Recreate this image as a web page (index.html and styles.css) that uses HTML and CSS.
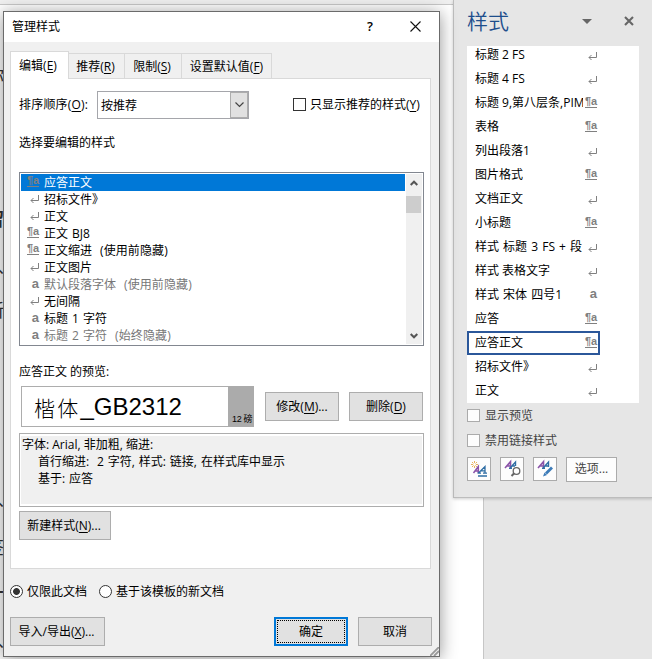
FILE: index.html
```html
<!DOCTYPE html>
<html lang="zh-CN">
<head>
<meta charset="utf-8">
<title>管理样式</title>
<link rel="stylesheet" href="styles.css">
</head>
<body>
<svg class="defs" aria-hidden="true">
  <symbol id="ret" viewBox="0 0 9 9"><path d="M8.5 0v5.5H1M3.5 3L1 5.5L3.5 8" fill="none" stroke="#808080"/></symbol>
  <symbol id="up" viewBox="0 0 8 6"><path d="M.7 5L4 1.7L7.3 5" fill="none" stroke="#555" stroke-width="2"/></symbol>
</svg>
<div class="ribbon"></div>
<div class="canvas"></div>

<aside class="pane">
  <header class="pane-head"><h1>样式</h1>
    <svg class="menu" viewBox="0 0 10 5"><path d="M0 0h10L5 5z" fill="#666"/></svg>
    <svg class="shut" viewBox="0 0 10 10"><path d="M1 1l8 8M9 1l-8 8" stroke="#666" stroke-width="2.1"/></svg>
  </header>
  <div class="styles">
    <div class="style"><span>标题 2 FS</span><svg class="ret"><use href="#ret"/></svg></div>
    <div class="style"><span>标题 4 FS</span><svg class="ret"><use href="#ret"/></svg></div>
    <div class="style"><span>标题 9,第八层条,PIM</span><b class="pa">¶a</b></div>
    <div class="style"><span>表格</span><b class="pa">¶a</b></div>
    <div class="style"><span>列出段落1</span><svg class="ret"><use href="#ret"/></svg></div>
    <div class="style"><span>图片格式</span><b class="pa">¶a</b></div>
    <div class="style"><span>文档正文</span><svg class="ret"><use href="#ret"/></svg></div>
    <div class="style"><span>小标题</span><b class="pa">¶a</b></div>
    <div class="style"><span class="wide">样式 标题 3 FS + 段</span><svg class="ret"><use href="#ret"/></svg></div>
    <div class="style"><span>样式 表格文字</span><svg class="ret"><use href="#ret"/></svg></div>
    <div class="style"><span class="wide">样式 宋体 四号1</span><b class="ch">a</b></div>
    <div class="style"><span>应答</span><b class="pa">¶a</b></div>
    <div class="style current"><span>应答正文</span><b class="pa">¶a</b></div>
    <div class="style"><span>招标文件》</span><svg class="ret"><use href="#ret"/></svg></div>
    <div class="style"><span>正文</span><svg class="ret"><use href="#ret"/></svg></div>
  </div>
  <label class="opt"><i></i>显示预览</label>
  <label class="opt"><i></i>禁用链接样式</label>
  <div class="tools">
    <button class="tool"><svg viewBox="0 0 22 22"><path d="M6.500 3v7M3 6.500h7M4 4l5 5M9 4l-5 5" stroke="#e8b45c" stroke-width="1"/><circle cx="6.500" cy="6.500" r="1.400" fill="#fff"/><path d="M5.500 15L10.300 8.500V15M7.500 13h3" fill="none" stroke="#8a53a8" stroke-width="1.500"/><path d="M10.500 15L17 8.500V15M13 12.800h4M9.500 15.200h3.500M15 15.200h4M10 18h9" fill="none" stroke="#2e6da4" stroke-width="1.300"/></svg></button>
    <button class="tool"><svg viewBox="0 0 22 22"><path d="M4 10L9.500 3.700V10M6 8h4" fill="none" stroke="#8a53a8" stroke-width="1.600"/><path d="M9.500 9.500L14.500 4V8M11 8h3M8 10.300h3" fill="none" stroke="#2e6da4" stroke-width="1.400"/><circle cx="15.500" cy="13" r="3.300" fill="#fff" stroke="#666" stroke-width="1.300"/><path d="M13.200 15.300L10.500 18" stroke="#666" stroke-width="2"/></svg></button>
    <button class="tool"><svg viewBox="0 0 22 22"><path d="M4 10L9.500 3.700V10M6 8h4" fill="none" stroke="#8a53a8" stroke-width="1.600"/><path d="M9.500 9.500L14.500 4V9M11 8h3M8 10.300h3" fill="none" stroke="#2e6da4" stroke-width="1.400"/><path d="M18 9.500L12 15.500" stroke="#3c7bb8" stroke-width="2.800"/><path d="M10.500 14.500l2.500 2.500L9 18.500z" fill="#3c7bb8"/></svg></button>
    <button class="options">选项...</button>
  </div>
</aside>

<div class="doc-edge">
  <span class="f1">你</span><span class="f2">留</span><span class="f3">、</span><span class="f4">新</span><span class="f5">、</span><span class="f6">签</span><span class="f7">-</span><span class="f8">、</span>
</div>

<section class="dialog">
  <header class="title"><span>管理样式</span><span class="help">?</span>
    <svg class="close" viewBox="0 0 11 11"><path d="M.5.5l10 10M10.500.5l-10 10" stroke="#111" stroke-width="1.100"/></svg></header>
  <nav class="tabs">
    <div class="tab on">编辑(<u>E</u>)</div><div class="tab t2">推荐(<u>R</u>)</div><div class="tab t3">限制(<u>S</u>)</div><div class="tab t4">设置默认值(<u>F</u>)</div>
  </nav>
  <div class="panel">
    <div class="sort">
      <label>排序顺序(<u>O</u>):</label>
      <div class="combo"><span>按推荐</span><i><svg viewBox="0 0 9 6"><path d="M.5.5l4 4l4-4" fill="none" stroke="#444" stroke-width="1.200"/></svg></i></div>
      <i class="box"></i><label class="only">只显示推荐的样式(<u>Y</u>)</label>
    </div>
    <div class="caption">选择要编辑的样式</div>
    <div class="list">
      <div class="rows">
        <div class="row sel"><i><b class="pa">¶a</b></i>应答正文</div>
        <div class="row"><i><svg class="ret"><use href="#ret"/></svg></i>招标文件》</div>
        <div class="row"><i><svg class="ret"><use href="#ret"/></svg></i>正文</div>
        <div class="row sp"><i><b class="pa">¶a</b></i>正文 BJ8</div>
        <div class="row"><i><b class="pa">¶a</b></i>正文缩进<em>(使用前隐藏)</em></div>
        <div class="row"><i><svg class="ret"><use href="#ret"/></svg></i>正文图片</div>
        <div class="row dim"><i><b class="ch">a</b></i>默认段落字体<em>(使用前隐藏)</em></div>
        <div class="row"><i><svg class="ret"><use href="#ret"/></svg></i>无间隔</div>
        <div class="row sp"><i><b class="ch">a</b></i>标题 1 字符</div>
        <div class="row dim sp"><i><b class="ch">a</b></i>标题 2 字符<em>(始终隐藏)</em></div>
      </div>
      <div class="scroll"><svg><use href="#up"/></svg><div class="thumb"></div><svg class="down"><use href="#up"/></svg></div>
    </div>
    <div class="caption pv">应答正文 的预览:</div>
    <div class="preview">
      <div class="sample"><span class="kai">楷体</span><span class="latin">_GB2312</span><small>12 磅</small></div>
      <button class="btn">修改(<u>M</u>)...</button><button class="btn">删除(<u>D</u>)</button>
    </div>
    <div class="desc"><div>
      <p>字体: Arial, 非加粗, 缩进:</p><p class="in">首行缩进:&nbsp; 2 字符, 样式: 链接, 在样式库中显示</p><p class="in">基于: 应答</p>
    </div></div>
    <button class="btn new">新建样式(<u>N</u>)...</button>
  </div>
  <div class="radios"><i class="radio on"></i><label>仅限此文档</label><i class="radio"></i><label>基于该模板的新文档</label></div>
  <footer class="actions"><button class="btn imp">导入/导出(<u>X</u>)...</button><button class="btn ok"><span>确定</span></button><button class="btn">取消</button></footer>
  <svg class="grip" viewBox="0 0 9 9"><path d="M0 9L9 0M4 9L9 4" stroke="#999" stroke-width="1.800"/></svg>
</section>
</body>
</html>
```
FILE: styles.css
```css
* { box-sizing: border-box; }
body {
  margin: 0; width: 652px; height: 659px; overflow: hidden; position: relative;
  background: #fff; color: #000;
  font: 12px/17px "Open Sans", "Noto Sans CJK SC", sans-serif;
}
h1, p { margin: 0; font-weight: normal; }
i, em { font-style: normal; }
svg { display: block; flex: none; }
u { text-underline-offset: 2px; text-decoration-thickness: 1px; }
button { font: inherit; color: inherit; padding: 0; white-space: nowrap; }
.defs { position: absolute; width: 0; height: 0; }
.ribbon { height: 5px; background: #f0f0f0; border-bottom: 1px solid #c8c8c8; }
.canvas { margin-left: 483px; height: 654px; background: #e6e6e6; border-left: 1px solid #c6c6c6; }

.ret { width: 9px; height: 9px; }
.pa, .ch { color: #808080; font: bold 12px/11px "Liberation Sans", sans-serif; }
.ch { font-size: 13px; margin-bottom: 2px; }
.pa { height: 11px; width: 12px; font-size: 11px; line-height: 8px; letter-spacing: -.2px; border-bottom: 1px solid #808080; white-space: nowrap; margin-bottom: 2px; }

.pane { position: absolute; left: 453px; top: 0; width: 200px; height: 498px; padding: 0 13px; background: #e6e6e6; border: solid #bdbdbd; border-width: 0 0 1px 1px; box-shadow: 0 1px 3px rgba(0,0,0,.2); color: #444; }
.pane-head { height: 46px; display: flex; align-items: center; padding-bottom: 3px; }
.pane-head h1 { font-size: 21px; line-height: 30px; width: 115px; margin-top: -2px; color: #1e4e8c; font-weight: 350; }
.menu { width: 10px; height: 5px; }
.shut { width: 10px; height: 10px; margin: -1px 0 0 32px; }
.styles { width: 172px; height: 357px; background: #fff; overflow: hidden; color: #000; }
.style { height: 24px; width: 133px; padding: 0 3px 2px 8px; display: flex; align-items: center; justify-content: space-between; }
.style:first-child { margin-top: -3px; }
.style span { max-width: 108px; overflow: hidden; white-space: nowrap; flex: none; }
.wide { word-spacing: 1px; }
.style .ret { margin-top: 4px; }
.style .pa { margin-bottom: 0; }
.style.current { border: 2px solid #2b579a; padding: 0 1px 2px 6px; }
.opt { display: flex; align-items: center; height: 25px; gap: 5px; }
.opt i { width: 13px; height: 13px; background: #fdfdfd; border: 1px solid #ababab; }
.tools { display: flex; gap: 9px; margin-top: 4px; }
.tool { width: 24px; height: 24px; background: #fdfdfd; border: 1px solid #ababab; }
.options { width: 51px; height: 25px; background: #fdfdfd; border: 1px solid #ababab; padding-bottom: 2px; }

.doc-edge { position: absolute; left: 0; top: 0; width: 4px; height: 659px; overflow: hidden; font: 18px/20px "Noto Sans CJK SC", sans-serif; color: #333; display: flex; flex-direction: column; align-items: flex-end; }
.doc-edge span { height: 20px; flex: none; }
.f1 { margin-top: 64px; }
.f2 { margin-top: 124px; font-weight: bold; }
.f3 { margin-top: 27px; }
.f4 { margin-top: 24px; }
.f5 { margin-top: 169px; }
.f6 { margin-top: 28px; }
.f7 { margin-top: 23px; font-weight: bold; }
.f8 { margin-top: 30px; }
.doc-edge .f3, .doc-edge .f5, .doc-edge .f8 { margin-right: -11px; }

.dialog { position: absolute; left: 3px; top: 11px; width: 437px; height: 646px; background: #f0f0f0; border: 1px solid #6b6b6b; box-shadow: 0 2px 16px rgba(0,0,0,.42); }
.title { height: 30px; background: #fff; display: flex; align-items: center; padding: 0 18px 1px 8px; }
.help { margin-left: auto; font-size: 13px; margin-right: 37px; font-weight: 600; }
.close { width: 11px; height: 11px; }
.tabs { display: flex; align-items: flex-end; margin: 9px 0 -1px 6px; height: 28px; position: relative; }
.tab { height: 26px; border: 1px solid #d9d9d9; border-left: 0; padding: 4px 2px 0 0; text-align: center; white-space: nowrap; }
.tab.on { width: 59px; height: 28px; background: #fff; border: 1px solid #d9d9d9; border-bottom: 0; padding: 5px 3px 0 0; }
.t2 { width: 56px; }
.t3 { width: 57px; }
.t4 { width: 90px; padding-right: 0; }
.panel { margin-left: 6px; width: 421px; height: 491px; background: #fff; border: 1px solid #d9d9d9; padding: 12px 6px 0 8px; }
.sort { display: flex; align-items: center; height: 28px; white-space: nowrap; }
.sort > label { margin-top: -1px; }
.sort > label:first-child { width: 78px; letter-spacing: .2px; }
.combo { width: 152px; height: 28px; border: 1px solid #a5a6ab; display: flex; align-items: center; justify-content: space-between; padding-left: 3px; }
.combo i { width: 18px; height: 26px; background: #e1e1e1; border: 1px solid #adadad; display: grid; place-items: center; }
.combo svg { width: 9px; height: 6px; }
.box { width: 13px; height: 13px; border: 1px solid #333; margin: -1px 4px 0 44px; }
.caption { margin-top: 15px; height: 17px; }
.list { margin-top: 21px; width: 405px; height: 174px; border: 1px solid #828790; display: flex; padding: 1px; }
.rows { width: 384px; margin-right: 1px; flex: none; }
.row { display: flex; align-items: center; height: 17px; white-space: pre; }
.row i { width: 18px; margin-right: 5px; display: flex; justify-content: flex-end; }
.row em { margin-left: 8px; letter-spacing: .1px; }
.sel { background: #0078d7; color: #fff; }
.dim { color: #777; }
.sp { word-spacing: 1px; }
.scroll { width: 16px; height: 170px; background: #f0f0f0; display: flex; flex-direction: column; align-items: center; padding: 6px 0 5px; }
.scroll svg { width: 8px; height: 6px; }
.thumb { width: 15px; height: 17px; margin-top: 10px; background: #cdcdcd; align-self: flex-start; }
.scroll .down { margin-top: auto; transform: scaleY(-1); }
.pv { margin-top: 17px; }
.preview { display: flex; align-items: center; margin: 6px 0 0 2px; height: 41px; }
.sample { width: 233px; height: 41px; border: 1px solid #adadad; display: flex; align-items: center; padding-left: 12px; margin-right: 11px; }
.kai { font: 300 21px/30px "Noto Sans CJK SC", sans-serif; letter-spacing: 2.200px; }
.latin { font: 24px/30px "Liberation Sans", sans-serif; white-space: nowrap; }
.sample small { width: 26px; height: 41px; margin-left: auto; margin-right: -1px; flex: none; background: #ababab; font: 9px/12px "Liberation Sans", "Noto Sans CJK SC", sans-serif; letter-spacing: -.3px; padding: 27px 0 0 4px; white-space: nowrap; }
.btn { width: 74px; height: 29px; background: #e1e1e1; border: 1px solid #adadad; flex: none; }
.preview .btn:last-child { margin-left: 10px; }
.actions .btn + .btn { margin-left: 10px; }
.desc { margin-top: 6px; width: 405px; height: 74px; border: 1px solid #adadad; padding: 2px 1px; }
.desc div { height: 68px; background: #f0f0f0; padding-left: 1px; white-space: nowrap; }
.in { padding-left: 16px; word-spacing: .8px; }
.new { width: 92px; margin-top: 4px; display: block; padding-right: 2px; }
.radios { display: flex; align-items: center; margin: 14px 0 0 6px; height: 17px; }
.radio { width: 13px; height: 13px; border: 1px solid #333; border-radius: 50%; background: #fff; margin-right: 4px; }
.radio.on { background: radial-gradient(circle, #333 3px, #fff 3.800px); }
.radios label + .radio { margin-left: 12px; }
.actions { display: flex; margin: 17px 0 0 6px; }
.actions .imp { width: 95px; margin-right: 159px; padding-right: 2px; }
.actions .imp + .ok { margin-left: 10px; }
.actions .ok { border: 2px solid #0078d7; padding: 1px; }
.ok span { display: block; height: 23px; line-height: 21px; border: 1px dotted #000; }
.grip { position: absolute; right: 0; bottom: 0; width: 9px; height: 9px; }
```
